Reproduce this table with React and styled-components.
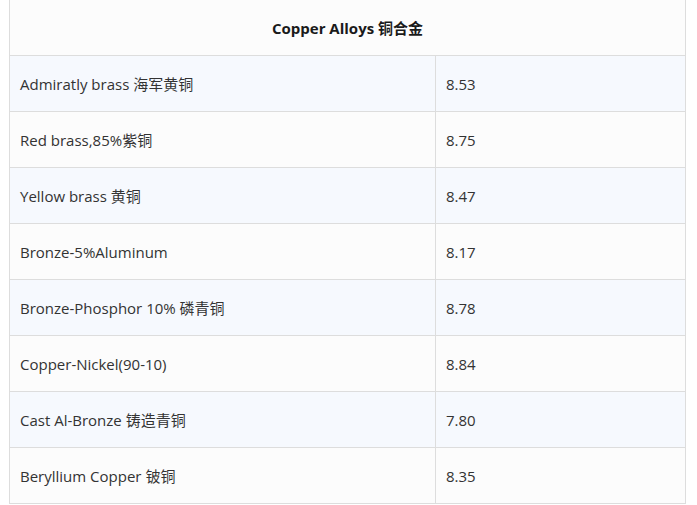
import React from 'react';
import styled, { createGlobalStyle } from 'styled-components';

const GlobalStyle = createGlobalStyle`
  body {
    margin: 0;
    background: #ffffff;
    font-family: "Open Sans", "Noto Sans CJK SC", sans-serif;
  }
`;

const Page = styled.div`
  padding: 0 11px 0 9px;
`;

const Table = styled.table`
  width: 677px;
  border-collapse: collapse;
  font-size: 15px;
  line-height: 20px;
  color: #333;
`;

const HeadCell = styled.th`
  height: 55px;
  padding: 0;
  background: #fcfcfc;
  font-weight: 700;
  color: #1a1a1a;
  text-align: center;
  border-left: 1px solid #dddddd;
  border-right: 1px solid #dddddd;
  border-bottom: 1px solid #dddddd;
`;

const Row = styled.tr`
  background: ${(p) => (p.$shade ? '#f6f9fe' : '#fcfcfc')};
`;

const Cell = styled.td`
  height: 55px;
  padding: 0 10px;
  border: 1px solid #dddddd;
  width: ${(p) => p.$w};
`;

const rows = [
  ['Admiratly brass 海军黄铜', '8.53'],
  ['Red brass,85%紫铜', '8.75'],
  ['Yellow brass 黄铜', '8.47'],
  ['Bronze-5%Aluminum', '8.17'],
  ['Bronze-Phosphor 10% 磷青铜', '8.78'],
  ['Copper-Nickel(90-10)', '8.84'],
  ['Cast Al-Bronze 铸造青铜', '7.80'],
  ['Beryllium Copper 铍铜', '8.35'],
];

export default function App() {
  return (
    <Page>
      <GlobalStyle />
      <Table>
        <thead>
          <tr>
            <HeadCell colSpan={2}>Copper Alloys 铜合金</HeadCell>
          </tr>
        </thead>
        <tbody>
          {rows.map(([name, value], i) => (
            <Row key={name} $shade={i % 2 === 0}>
              <Cell $w="405px">{name}</Cell>
              <Cell>{value}</Cell>
            </Row>
          ))}
        </tbody>
      </Table>
    </Page>
  );
}
